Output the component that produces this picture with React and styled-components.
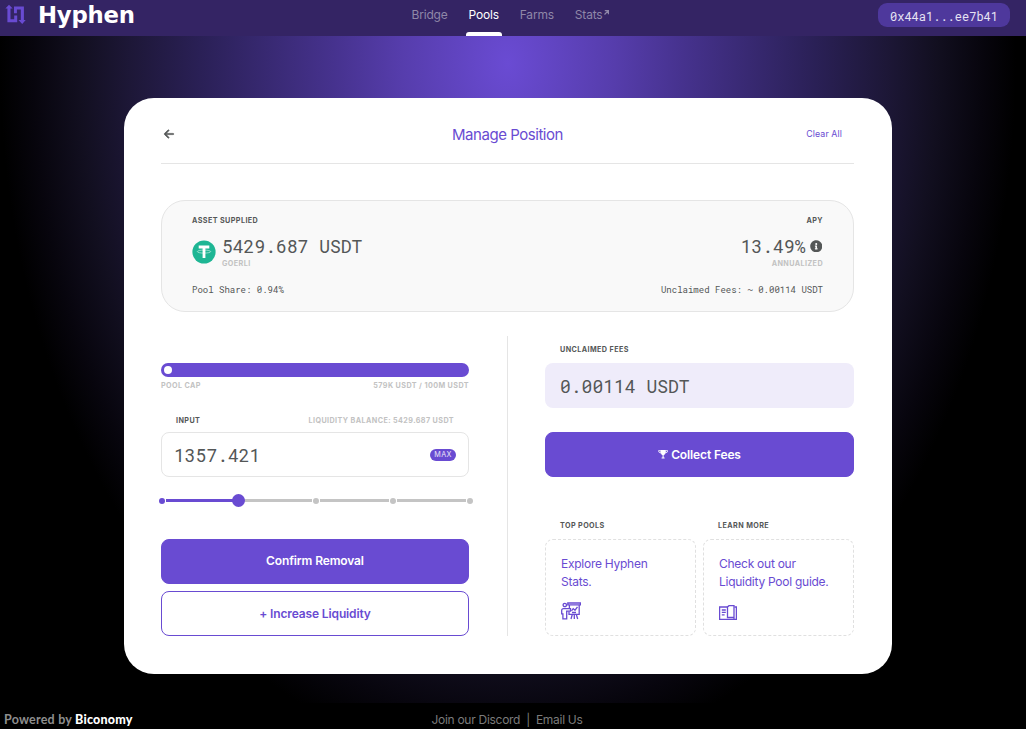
import React from 'react'
import styled, { createGlobalStyle } from 'styled-components'
import { FaInfoCircle } from 'react-icons/fa'
import { HiArrowLeft } from 'react-icons/hi'

const purple = '#694bd2'
const grey = '#545757'
const lightGrey = '#c2c2c2'
const mono = "'Roboto Mono', 'Liberation Mono', monospace"

const GlobalStyle = createGlobalStyle`
  * {
    box-sizing: border-box;
  }
  body {
    margin: 0;
    background: #000;
    font-family: Inter, 'Liberation Sans', sans-serif;
  }
  h1, p {
    margin: 0;
  }
  button {
    font-family: inherit;
    cursor: pointer;
  }
  a {
    color: inherit;
    text-decoration: none;
  }
  svg {
    display: block;
    flex-shrink: 0;
  }
`

const Page = styled.div`
  display: flex;
  flex-direction: column;
  height: 729px;
  overflow: hidden;
`

const Header = styled.header`
  display: grid;
  grid-template-columns: 1fr auto 1fr;
  height: 36px;
  padding: 0 16px 0 5px;
  background: #342464;
`

const Brand = styled.a`
  display: flex;
  align-items: flex-start;
  padding-top: 4px;
`

const Wordmark = styled.span`
  margin: -3px 0 0 12px;
  color: #fff;
  font-family: 'DejaVu Sans', sans-serif;
  font-size: 23px;
  font-weight: 700;
  line-height: 28px;
  letter-spacing: -0.2px;
  transform: scaleX(0.99);
  transform-origin: left;
`

const Nav = styled.nav`
  display: flex;
  gap: 15px;
  margin-left: 6px;
`

const NavLink = styled.a`
  display: flex;
  flex-direction: column;
  justify-content: space-between;
  height: 36px;
  padding: 7px 3px 0;
  color: ${props => props.$active ? '#fff' : '#8f87a8'};
  font-size: 12px;
  line-height: 16px;
  letter-spacing: -0.2px;
  &::after {
    content: '';
    height: 4px;
    margin: 0 -3px;
    border-radius: 3px 3px 0 0;
    background: ${props => props.$active ? '#fff' : 'transparent'};
  }
`

const NavText = styled.span`
  display: flex;
  gap: 2px;
  & > svg {
    margin-top: 3px;
  }
`

const Wallet = styled.button`
  justify-self: end;
  width: 132px;
  height: 24px;
  margin-top: 3px;
  padding: 1px 0 0;
  border: 0;
  border-radius: 9px;
  background: #4e389c;
  color: #e6e2f3;
  font-family: ${mono};
  font-size: 12px;
`

const Main = styled.main`
  display: flex;
  justify-content: center;
  align-items: flex-start;
  height: 667px;
  padding: 62px 10px 0 0;
  background: radial-gradient(508px 702px at 508px 27px,
    #6a4bd3 0%, #563dac 21%, #46328e 34.4%, #2a2056 60.6%,
    #1d1737 74.5%, #120f20 84.3%, #07050d 93.5%, #000 100%);
`

const Card = styled.section`
  width: 768px;
  height: 576px;
  padding: 0 38px 0 37px;
  border-radius: 30px;
  background: #fff;
`

const CardHeader = styled.div`
  display: grid;
  grid-template-columns: 1fr auto 1fr;
  align-items: center;
  height: 66px;
  padding: 8px 12px 0 0;
  border-bottom: 1px solid #e5e5e5;
`

const Back = styled.a`
  padding: 0 0 1px 2px;
  color: ${grey};
  & > svg {
    stroke: currentColor;
    stroke-width: 1.1px;
  }
`

const Title = styled.h1`
  padding-left: 12px;
  color: ${purple};
  font-size: 15px;
  font-weight: 400;
  letter-spacing: -0.46px;
`

const ClearAll = styled.a`
  justify-self: end;
  padding-bottom: 2px;
  color: ${purple};
  font-size: 8.8px;
  letter-spacing: 0.1px;
`

const Summary = styled.div`
  display: flex;
  justify-content: space-between;
  height: 112px;
  margin-top: 36px;
  padding: 14px 30px 0;
  border: 1px solid #e5e5e5;
  border-radius: 24px;
  background: #f9f9f9;
`

const SummaryColumn = styled.div`
  display: flex;
  flex-direction: column;
  align-items: ${props => props.$right ? 'flex-end' : 'flex-start'};
`

const Label = styled.span`
  color: ${props => props.$muted ? lightGrey : grey};
  font-size: 7.2px;
  font-weight: 700;
  line-height: 11px;
  letter-spacing: 0.41px;
  text-transform: uppercase;
  white-space: nowrap;
`

const Asset = styled.div`
  display: flex;
  height: 39px;
  margin-top: 9px;
`

const TokenIcon = styled.svg`
  margin: 5px 6px 0 0;
`

const Figures = styled.div`
  display: flex;
  flex-direction: column;
  align-items: ${props => props.$right ? 'flex-end' : 'flex-start'};
`

const Amount = styled.span`
  display: flex;
  align-items: center;
  gap: 4px;
  color: ${grey};
  font-family: ${mono};
  font-size: 18px;
  line-height: 23px;
  & > svg {
    margin: 0 1px 1px 0;
  }
`

const Detail = styled.span`
  margin-top: 9px;
  color: ${grey};
  font-family: ${mono};
  font-size: 9px;
  line-height: 14px;
`

const Columns = styled.div`
  display: grid;
  grid-template-columns: 308px 1fr 309px;
  height: 300px;
  margin-top: 24px;
`

const Divider = styled.div`
  width: 1px;
  margin-left: 38px;
  background: #e5e5e5;
`

const Column = styled.div`
  display: flex;
  flex-direction: column;
`

const CapBar = styled.div`
  display: flex;
  align-items: center;
  height: 14px;
  margin-top: 27px;
  padding: 0 3px;
  border-radius: 7px;
  background: ${purple};
`

const CapFill = styled.div`
  min-width: 8px;
  height: 8px;
  border-radius: 4px;
  background: #fff;
`

const LabelRow = styled.div`
  display: flex;
  justify-content: space-between;
  margin-top: ${props => props.$top}px;
  padding: 0 ${props => props.$inset || 0}px;
`

const Field = styled.div`
  display: flex;
  justify-content: space-between;
  align-items: center;
  height: 45px;
  margin-top: ${props => props.$top}px;
  padding: 2px 12px 0 ${props => props.$filled ? 15 : 12}px;
  border: ${props => props.$filled ? '0' : '1px solid #e5e5e5'};
  border-radius: 8px;
  background: ${props => props.$filled ? '#efecfa' : '#fff'};
`

const Max = styled.button`
  width: 26px;
  height: 12px;
  margin-top: -2px;
  padding: 0;
  border: 0;
  border-radius: 6px;
  background: ${purple};
  color: #e9e4f8;
  font-size: 7.2px;
  line-height: 11px;
  letter-spacing: 0.3px;
`

const Slider = styled.div`
  display: flex;
  align-items: center;
  gap: 1px;
  height: 13px;
  margin: 17px -4px 0 -2px;
`

const Stop = styled.span`
  width: 6px;
  height: 6px;
  border-radius: 50%;
  background: ${props => props.$on ? purple : '#c4c4c4'};
`

const Handle = styled.span`
  width: 13px;
  height: 13px;
  margin: 0 -4px;
  border-radius: 50%;
  background: ${purple};
  z-index: 1;
`

const Rail = styled.span`
  flex: 1;
  height: 3px;
  background: ${props => props.$on ? purple : '#c4c4c4'};
`

const Button = styled.button`
  display: flex;
  justify-content: center;
  align-items: center;
  gap: 3px;
  height: 45px;
  margin-top: ${props => props.$top}px;
  padding: 0 0 ${props => props.$lift || 1}px;
  border: 1px solid ${purple};
  border-radius: 8px;
  background: ${props => props.$outline ? '#fff' : purple};
  color: ${props => props.$outline ? purple : '#fff'};
  font-size: 12px;
  font-weight: 600;
  letter-spacing: -0.13px;
`

const Links = styled.div`
  display: grid;
  grid-template-columns: 151px 151px;
  gap: 7px;
  margin-top: 43px;
`

const LinkGroup = styled.div`
  display: flex;
  flex-direction: column;
  & > ${Label} {
    padding-left: 15px;
  }
`

const LinkCard = styled.a`
  display: flex;
  flex-direction: column;
  justify-content: space-between;
  height: 97px;
  margin-top: 8px;
  padding: 15px 12px 15px 15px;
  border: 1px dashed #e0e0e0;
  border-radius: 8px;
  color: ${purple};
  font-size: 12px;
  line-height: 18px;
  letter-spacing: -0.26px;
  white-space: nowrap;
`

const Footer = styled.footer`
  display: grid;
  grid-template-columns: 1fr auto 1fr;
  height: 26px;
  padding: 9px 16px 0 4px;
  color: #7b7b7b;
  font-size: 12px;
  line-height: 16px;
  letter-spacing: -0.28px;
`

const Powered = styled.span`
  color: #8e8e8e;
  font-size: 12.5px;
  font-family: Lato, sans-serif;
  font-weight: 700;
  letter-spacing: 0.22px;
  & > b {
    color: #fff;
  }
`

const FooterLinks = styled.span`
  display: flex;
  gap: 6px;
`

function LogoMark () {
  return (
    <svg width='21' height='21' viewBox='0 0 21 21' fill={purple}>
      <path d='M4 0.8L7.7 4.6H5.5V15.2H9.2V11.4H12.2V18.2H2.4V4.6H0.4z' />
      <path d='M9 2.6H18.9V16H20.7L17.2 20 13.5 16H15.8V5.6H11.9V9.2H9z' />
    </svg>
  )
}

function ExternalArrow () {
  return (
    <svg width='5' height='5' viewBox='0 0 5 5' fill='none' stroke='currentColor' strokeWidth='1.2'>
      <path d='M0.5 4.5l3.5-3.5M0.8 0.6h3.6V4.2' />
    </svg>
  )
}

function Tether () {
  return (
    <TokenIcon width='24' height='24' viewBox='0 0 24 24'>
      <circle cx='12' cy='12' r='11.6' fill='#1eb694' />
      <path d='M6.7 5.6h10.6v2.8H13.4v9.5h-2.8V8.4H6.7z' fill='#fff' />
      <ellipse cx='12' cy='11.6' rx='6.7' ry='1.5' fill='none' stroke='#fff' strokeWidth='0.5' />
    </TokenIcon>
  )
}

function Trophy () {
  return (
    <svg width='10' height='10' viewBox='0 0 10 10' fill='none' stroke='currentColor'>
      <path d='M2.4 1h5.4v2.4L6.3 6H3.9L2.4 3.4z' fill='currentColor' stroke='none' />
      <path d='M2.6 1.6H.6l.3 1.5 2 1M7.6 1.6h2l-.3 1.5-2 1' strokeWidth='0.8' />
      <path d='M5.1 5v3.8M3.6 9h3' strokeWidth='1.1' />
    </svg>
  )
}

function Presentation () {
  return (
    <svg width='20' height='18' viewBox='0 0 20 18' fill='none' stroke='currentColor' strokeWidth='1.3'>
      <circle cx='3.8' cy='3' r='1.7' />
      <path d='M9.5 6.6H2.6C1.3 6.6.7 7.3.7 8.5v3.3h1.2v5h3.8V9.2h3.8z' />
      <path d='M6.8 1h12.6v1.8H6.8zM8.4 3v3M18.2 3v9.3H8V9.6' />
      <path d='M10.5 8.8l1.7-2.2 1.8 1.6 2.5-3.4M11 10.5h4' />
      <path d='M11.3 12.5L10 17M13.3 12.5V17M15.3 12.5l1.4 4.5' />
    </svg>
  )
}

function Guide () {
  return (
    <svg width='18' height='15' viewBox='0 0 18 15' fill='none' stroke='currentColor' strokeWidth='1.3'>
      <path d='M8.3 2H.6v12.4h16.8V2h-2' />
      <path d='M8.5 12.6V1.9L10 .7h5v11.8h-5zM15 12.5v1.5' />
      <path d='M2.8 5h4M2.8 7.4h4M2.8 9.8h2.8' />
    </svg>
  )
}

function AmountSlider () {
  return (
    <Slider>
      <Stop $on />
      <Rail $on />
      <Handle />
      <Rail />
      <Stop />
      <Rail />
      <Stop />
      <Rail />
      <Stop />
    </Slider>
  )
}

function PositionSummary () {
  return (
    <Summary>
      <SummaryColumn>
        <Label>Asset Supplied</Label>
        <Asset>
          <Tether />
          <Figures>
            <Amount>5429.687 USDT</Amount>
            <Label $muted>Goerli</Label>
          </Figures>
        </Asset>
        <Detail>Pool Share: 0.94%</Detail>
      </SummaryColumn>
      <SummaryColumn $right>
        <Label>APY</Label>
        <Asset>
          <Figures $right>
            <Amount>13.49%<FaInfoCircle size={12.5} /></Amount>
            <Label $muted>Annualized</Label>
          </Figures>
        </Asset>
        <Detail>Unclaimed Fees: ~ 0.00114 USDT</Detail>
      </SummaryColumn>
    </Summary>
  )
}

function App () {
  return (
    <Page>
      <GlobalStyle />
      <Header>
        <Brand href='#'>
          <LogoMark />
          <Wordmark>Hyphen</Wordmark>
        </Brand>
        <Nav>
          <NavLink href='#'><NavText>Bridge</NavText></NavLink>
          <NavLink href='#' $active><NavText>Pools</NavText></NavLink>
          <NavLink href='#'><NavText>Farms</NavText></NavLink>
          <NavLink href='#'><NavText>Stats<ExternalArrow /></NavText></NavLink>
        </Nav>
        <Wallet>0x44a1...ee7b41</Wallet>
      </Header>
      <Main>
        <Card>
          <CardHeader>
            <Back href='#'><HiArrowLeft size={12} /></Back>
            <Title>Manage Position</Title>
            <ClearAll href='#'>Clear All</ClearAll>
          </CardHeader>
          <PositionSummary />
          <Columns>
            <Column>
              <CapBar><CapFill /></CapBar>
              <LabelRow $top={3}>
                <Label $muted>Pool Cap</Label>
                <Label $muted>579K USDT / 100M USDT</Label>
              </LabelRow>
              <LabelRow $top={24} $inset={15}>
                <Label>Input</Label>
                <Label $muted>Liquidity Balance: 5429.687 USDT</Label>
              </LabelRow>
              <Field $top={6}>
                <Amount>1357.421</Amount>
                <Max>MAX</Max>
              </Field>
              <AmountSlider />
              <Button $top={32} $lift={2}>Confirm Removal</Button>
              <Button $top={7} $outline>+ Increase Liquidity</Button>
            </Column>
            <Divider />
            <Column>
              <LabelRow $top={8} $inset={15}>
                <Label>Unclaimed Fees</Label>
              </LabelRow>
              <Field $top={8} $filled>
                <Amount>0.00114 USDT</Amount>
              </Field>
              <Button $top={24}><Trophy />Collect Fees</Button>
              <Links>
                <LinkGroup>
                  <Label>Top Pools</Label>
                  <LinkCard href='#'>
                    <span>Explore Hyphen<br />Stats.</span>
                    <Presentation />
                  </LinkCard>
                </LinkGroup>
                <LinkGroup>
                  <Label>Learn More</Label>
                  <LinkCard href='#'>
                    <span>Check out our<br />Liquidity Pool guide.</span>
                    <Guide />
                  </LinkCard>
                </LinkGroup>
              </Links>
            </Column>
          </Columns>
        </Card>
      </Main>
      <Footer>
        <Powered>Powered by <b>Biconomy</b></Powered>
        <FooterLinks>
          <a href='#'>Join our Discord</a>
          <span>|</span>
          <a href='#'>Email Us</a>
        </FooterLinks>
      </Footer>
    </Page>
  )
}

export default App
